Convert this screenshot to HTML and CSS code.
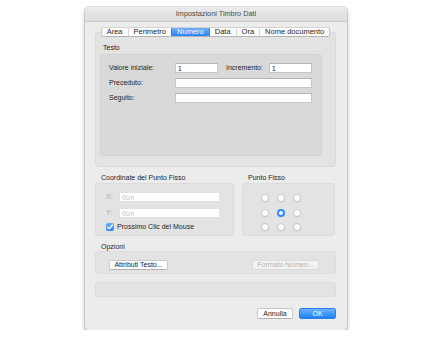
FILE: index.html
```html
<!DOCTYPE html>
<html lang="it">
<head>
    <meta charset="UTF-8">
    <meta name="viewport" content="width=device-width, initial-scale=1.0">
    <title>Impostazioni Timbro Dati</title>
    <link rel="stylesheet" href="styles.css">
</head>
<body>

    <div class="window">
        <div class="titlebar">Impostazioni Timbro Dati</div>

        <div class="content">
            <div class="tabs">
                <span class="tab">Area</span>
                <span class="tab">Perimetro</span>
                <span class="tab selected">Numero</span>
                <span class="tab">Data</span>
                <span class="tab">Ora</span>
                <span class="tab">Nome documento</span>
            </div>

            <div class="tabbox">
                <div class="group-title">Testo</div>
                <div class="group testo">
                    <div class="row">
                        <label class="lbl">Valore iniziale:</label>
                        <input class="field short" type="text" value="1">
                        <label class="lbl incr">Incremento:</label>
                        <input class="field short" type="text" value="1">
                    </div>
                    <div class="row">
                        <label class="lbl">Preceduto:</label>
                        <input class="field long" type="text">
                    </div>
                    <div class="row">
                        <label class="lbl">Seguito:</label>
                        <input class="field long" type="text">
                    </div>
                </div>
            </div>

            <div class="columns">
                <div class="col">
                    <div class="section-title">Coordinate del Punto Fisso</div>
                    <div class="group coords">
                        <div class="row">
                            <label class="lbl xy">X:</label>
                            <input class="field coord" type="text" placeholder="0cm" disabled>
                        </div>
                        <div class="row">
                            <label class="lbl xy">Y:</label>
                            <input class="field coord" type="text" placeholder="0cm" disabled>
                        </div>
                        <div class="row check-row">
                            <span class="checkbox">
                                <svg width="8" height="8" viewBox="0 0 8 8"><path d="M1.6 4.2 L3.2 5.8 L6.4 2" fill="none" stroke="#fff" stroke-width="1.3" stroke-linecap="round" stroke-linejoin="round"/></svg>
                            </span>
                            <span class="check-label">Prossimo Clic del Mouse</span>
                        </div>
                    </div>
                </div>
                <div class="col">
                    <div class="section-title">Punto Fisso</div>
                    <div class="group anchor">
                        <div class="radio-grid">
                            <span class="radio"></span>
                            <span class="radio"></span>
                            <span class="radio"></span>
                            <span class="radio"></span>
                            <span class="radio on"></span>
                            <span class="radio"></span>
                            <span class="radio"></span>
                            <span class="radio"></span>
                            <span class="radio"></span>
                        </div>
                    </div>
                </div>
            </div>

            <div class="section-title opt-title">Opzioni</div>
            <div class="group options">
                <button class="btn attr">Attributi Testo...</button>
                <button class="btn fmt" disabled>Formato Numeri...</button>
            </div>

            <div class="group empty"></div>

            <div class="actions">
                <button class="btn cancel">Annulla</button>
                <button class="btn ok">OK</button>
            </div>
        </div>
    </div>

</body>
</html>
```

FILE: styles.css
```css
body {
    margin: 0;
    padding: 7px 0 0 0;
    background-color: #fff;
    font-family: "Liberation Sans", Arial, sans-serif;
    font-size: 7px;
    color: #1e1e1e;
}
.window {
    width: 262px;
    height: 323px;
    margin: 0 auto;
    background-color: #ececec;
    border-radius: 4px;
    box-shadow: 0 0 0 1px rgba(0, 0, 0, 0.1), 0 3px 5px rgba(0, 0, 0, 0.3);
    box-sizing: border-box;
    overflow: hidden;
}
.titlebar {
    height: 14px;
    line-height: 14px;
    text-align: center;
    font-size: 7.3px;
    color: #4b4b4b;
    background: linear-gradient(#ebebeb, #dcdcdc);
    border-bottom: 1px solid #c9c9c9;
}
.content {
    padding: 5px 11px 0 10px;
}
.tabs {
    position: relative;
    z-index: 1;
    display: flex;
    width: max-content;
    height: 10px;
    margin: 0 auto;
    background-color: #fff;
    border: 1px solid #c4c4c4;
    border-top-color: #d2d2d2;
    border-bottom-color: #b4b4b4;
    border-radius: 3px;
    box-sizing: border-box;
    overflow: hidden;
}
.tab {
    padding: 0 5px;
    font-size: 7.5px;
    line-height: 8px;
    color: #1c1c1c;
    border-left: 1px solid #d6d6d6;
}
.tab:first-child {
    border-left: none;
}
.tab.selected {
    background: linear-gradient(#6db2fb, #2583f6);
    color: #fff;
    border-left-color: #2d86f5;
}
.tab.selected + .tab {
    border-left-color: #2d86f5;
}
.tabbox {
    margin-top: -5px;
    height: 135px;
    padding: 10px 13px 10px 4px;
    box-sizing: border-box;
    background-color: #e3e3e3;
    border: 1px solid #dadada;
    border-radius: 3px;
    display: flex;
    flex-direction: column;
}
.group-title {
    height: 10px;
    line-height: 10px;
    margin: 0 0 1px 3px;
}
.group {
    background-color: #e3e3e3;
    border: 1px solid #dcdcdc;
    border-radius: 3px;
    box-sizing: border-box;
}
.testo {
    flex: 1;
    background-color: #d9d9d9;
    border-color: #d3d3d3;
    padding: 8px 8px;
}
.row {
    display: flex;
    align-items: center;
    height: 10px;
    margin-bottom: 5px;
}
.lbl {
    width: 66px;
    flex: none;
    line-height: 10px;
}
.lbl.incr {
    width: 43px;
    margin-left: 8px;
}
.field {
    height: 10px;
    padding: 0 2px;
    margin: 0;
    box-sizing: border-box;
    border: 1px solid #c6c6c6;
    border-top-color: #b3b3b3;
    background-color: #fff;
    font-family: "Liberation Sans", Arial, sans-serif;
    font-size: 6.5px;
    color: #111;
    outline: none;
}
.field.short {
    width: 43px;
}
.field.long {
    width: 137px;
}
.columns {
    display: grid;
    grid-template-columns: 139px 93px;
    column-gap: 8px;
    margin-top: 6px;
}
.col {
    display: flex;
    flex-direction: column;
}
.section-title {
    height: 10px;
    line-height: 10px;
    padding-left: 6px;
}
.coords {
    height: 53px;
    padding: 8px 0 0 10px;
}
.coords .row {
    margin-bottom: 6px;
}
.lbl.xy {
    width: 13px;
    color: #a9a9a9;
}
.field.coord {
    width: 101px;
    border-color: #e0e0e0;
}
.field.coord::placeholder {
    color: #c4c4c4;
}
.check-row {
    height: 8px;
    margin-top: -1px;
}
.checkbox {
    width: 8px;
    height: 8px;
    border-radius: 2px;
    background: linear-gradient(#66aefa, #2c86f6);
    display: flex;
    align-items: center;
    justify-content: center;
}
.check-label {
    margin-left: 3px;
    line-height: 8px;
}
.anchor {
    height: 53px;
    padding: 10px 0 0 18px;
}
.radio-grid {
    display: grid;
    grid-template-columns: repeat(3, 8px);
    grid-auto-rows: 8px;
    column-gap: 8px;
    row-gap: 6.5px;
}
.radio {
    width: 8px;
    height: 8px;
    box-sizing: border-box;
    border-radius: 50%;
    background-color: #fff;
    border: 1px solid #c9c9c9;
    box-shadow: 0 0.5px 0.5px rgba(0, 0, 0, 0.08);
}
.radio.on {
    border: 2.5px solid #3189f6;
    background-color: #fff;
}
.opt-title {
    margin-top: 6px;
    height: 9px;
    line-height: 9px;
}
.options {
    height: 23px;
    padding: 8px 16px 0 13px;
    display: flex;
    justify-content: space-between;
    align-items: flex-start;
}
.btn {
    height: 10px;
    padding: 0;
    box-sizing: border-box;
    background-color: #fff;
    border: 1px solid #c8c8c8;
    border-bottom-color: #b0b0b0;
    border-radius: 2px;
    font-family: "Liberation Sans", Arial, sans-serif;
    font-size: 7px;
    line-height: 8px;
    color: #1c1c1c;
}
.btn.attr {
    width: 59px;
}
.btn.fmt {
    width: 67px;
    color: #b3b3b3;
    border-color: #dadada;
    background-color: #f3f3f3;
}
.empty {
    height: 15px;
    margin-top: 8px;
}
.actions {
    display: flex;
    justify-content: flex-end;
    gap: 6px;
    margin-top: 11px;
}
.btn.cancel {
    width: 36px;
    height: 11px;
}
.btn.ok {
    width: 37px;
    height: 11px;
    color: #fff;
    border: 1px solid #2a80f0;
    background: linear-gradient(#6bb1fb, #1f80f6);
}
```
